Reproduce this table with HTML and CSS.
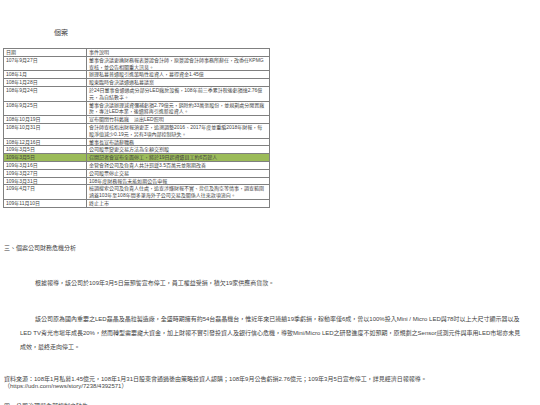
FILE: index.html
```html
<!DOCTYPE html>
<html lang="zh-Hant">
<head>
<meta charset="utf-8">
<title>個案</title>
<link rel="stylesheet" href="styles.css">
</head>
<body>
<div class="page">
  <p class="title">個案</p>
  <table class="events">
    <tr class="head"><td class="date">日期</td><td>事件說明</td></tr>
    <tr><td class="date">107年9月27日</td><td>董事會決議更換財務報表簽證會計師，原簽證會計師事務所辭任，改委任KPMG查核，並公告相關重大訊息。</td></tr>
    <tr><td class="date">108年1月</td><td>辦理私募普通股引進策略性投資人，募得資金1.45億</td></tr>
    <tr><td class="date">108年1月28日</td><td>股東臨時會決議通過私募議案</td></tr>
    <tr><td class="date">108年9月24日</td><td>於24日董事會通過處分部分LED廠房設備，108年前三季累計稅後虧損達2.76億元，為自結數字。</td></tr>
    <tr><td class="date">108年9月25日</td><td>董事會決議辦理減資彌補虧損2.79億元，銷除約33萬張股份，並規劃處分閒置廠房，專注LED本業，後續將再引進新投資人。</td></tr>
    <tr><td class="date">108年10月19日</td><td>宣布關閉竹科舊廠　淡出LED照明</td></tr>
    <tr><td class="date">108年10月31日</td><td>會計師查核指出財報須更正，追溯調整2016、2017年度並重編2018年財報，每股淨值減少0.19元，另有3項內部控制缺失。</td></tr>
    <tr><td class="date">108年12月16日</td><td>董事長宣布請辭職務</td></tr>
    <tr><td class="date">109年3月5日</td><td>公司股票變更交易方法為全額交割股</td></tr>
    <tr class="mark"><td class="date">109年3月5日</td><td>召開記者會宣布全面停工，將於19日起資遣員工約6百餘人</td></tr>
    <tr><td class="date">109年3月16日</td><td>金管會對公司及負責人共計罰鍰3.5百萬元並限期改善</td></tr>
    <tr><td class="date">109年3月27日</td><td>公司股票停止交易</td></tr>
    <tr><td class="date">109年3月31日</td><td>108年度財務報告未能如期公告申報</td></tr>
    <tr><td class="date">109年4月7日</td><td>檢調搜索公司及負責人住處，追查涉嫌財報不實、背信及掏空等情事，調查範圍涵蓋103年至108年間多筆海外子公司交易及關係人往來款項流向。</td></tr>
    <tr><td class="date">109年11月10日</td><td>終止上市</td></tr>
  </table>

  <p class="section">三、個案公司財務危機分析</p>

  <p class="para">根據報導，該公司於109年3月5日無預警宣布停工，員工權益受損，積欠19家供應商貨款。</p>

  <p class="para gap">該公司原為國內重要之LED磊晶及晶粒製造廠，全盛時期擁有約54台磊晶機台，惟近年來已連續19季虧損，稼動率僅6成，曾以100%投入Mini / Micro LED與78吋以上大尺寸顯示器以及LED TV背光市場年成長20%，然而轉型需要龐大資金，加上財報不實引發投資人及銀行信心危機，導致Mini/Micro LED之研發進度不如預期，原規劃之Sensor感測元件與車用LED市場亦未見成效，最終走向停工。</p>

  <p class="note">資料來源：108年1月私募1.45億元，108年1月31日股東會通過後由策略投資人認購；108年9月公告虧損2.76億元；109年3月5日宣布停工，詳見經濟日報報導。<br>（https://udn.com/news/story/7238/4392571）</p>

  <p class="section last">四、公司治理與內部控制之缺失</p>
</div>
</body>
</html>
```

FILE: styles.css
```css
html, body {
  margin: 0;
  padding: 0;
  background: #ffffff;
}

body {
  font-family: "Liberation Sans", "Noto Sans CJK TC", sans-serif;
  color: #444444;
}

.page {
  width: 540px;
  padding: 0;
}

.title {
  margin: 29px 0 0 54px;
  font-size: 7px;
  line-height: 8px;
}

.events {
  margin: 11px 0 0 3px;
  width: 267px;
  border-collapse: collapse;
  font-size: 5px;
  line-height: 6.8px;
}

.events td {
  border: 1px solid #808080;
  padding: 0 2px;
  vertical-align: top;
}

.events td.date {
  width: 78px;
}

.events tr.mark td {
  background: #9bbb59;
}

.section {
  margin: 36px 0 0 4px;
  font-size: 6px;
  line-height: 8px;
}

.para {
  margin: 24px 0 0 0;
  padding: 0 14px 0 20px;
  text-indent: 15px;
  font-size: 6px;
  line-height: 14px;
}

.para.gap {
  margin-top: 22px;
}

.note {
  margin: 22px 0 0 4px;
  padding-right: 80px;
  font-size: 6px;
  line-height: 7px;
}

.section.last {
  margin-top: 12px;
}
```
